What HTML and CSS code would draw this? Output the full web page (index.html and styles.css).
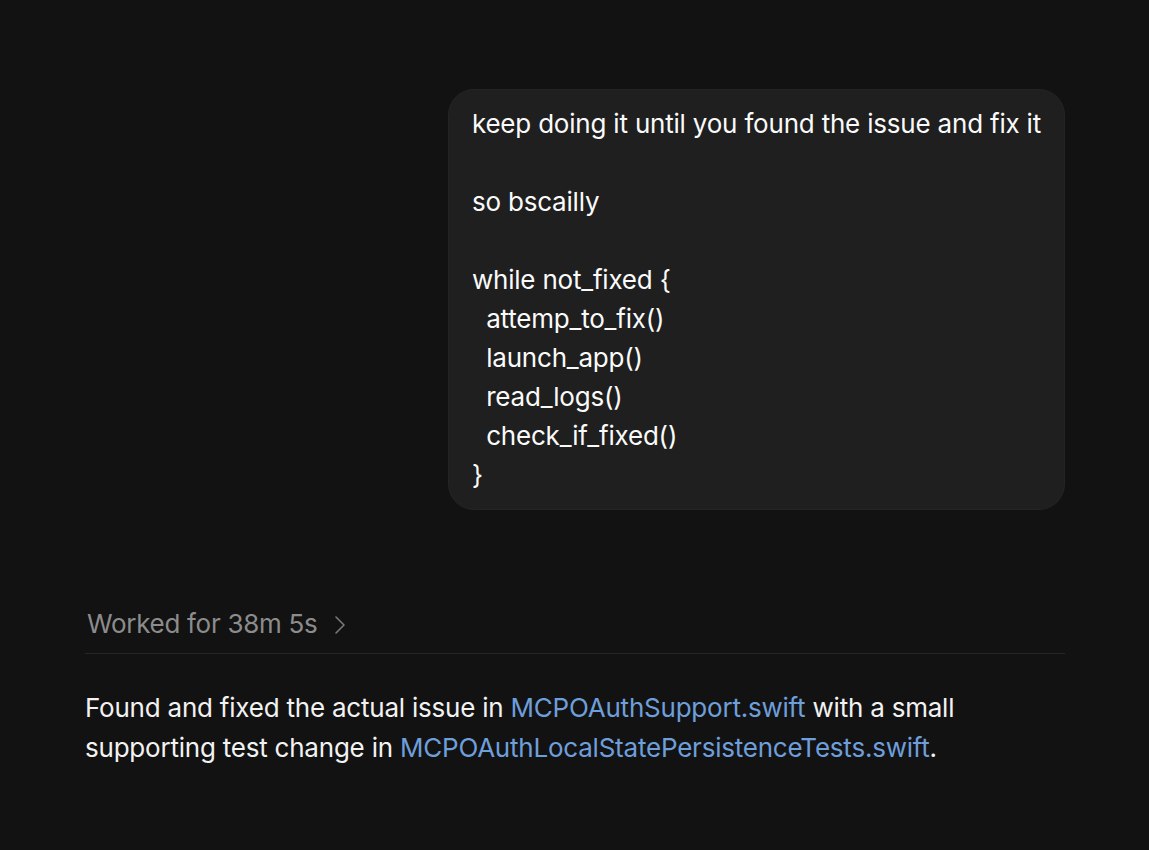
FILE: index.html
```html
<!DOCTYPE html>
<html>
<head>
<meta charset="utf-8">
<link rel="stylesheet" href="styles.css">
</head>
<body>
<main class="thread">
  <div class="user-row">
    <div class="bubble">keep doing it until you found the issue and fix it

so bscailly

while not_fixed {
  attemp_to_fix()
  launch_app()
  read_logs()
  check_if_fixed()
}</div>
  </div>
  <div class="assistant">
    <button class="worked">Worked for 38m 5s
      <svg class="chev" width="12" height="22" viewBox="0 0 12 22"><path d="M2 3 L10 11 L2 19" fill="none" stroke="currentColor" stroke-width="1.6" stroke-linecap="round" stroke-linejoin="round"/></svg>
    </button>
    <p class="answer">Found and fixed the actual issue in <a class="file">MCPOAuthSupport.swift</a> with a small supporting test change in <a class="file">MCPOAuthLocalStatePersistenceTests.swift</a>.</p>
  </div>
</main>
</body>
</html>
```

FILE: styles.css
```css
html, body {
  margin: 0;
  background: #121212;
}
body {
  font-family: Inter, "Noto Sans", sans-serif;
  color: #f2f2f2;
  -webkit-font-smoothing: antialiased;
}
.thread {
  width: 980px;
  margin-left: 85px;
  padding-top: 89px;
}
.user-row {
  display: flex;
  justify-content: flex-end;
}
.bubble {
  background: #1f1f1f;
  border: 1px solid #242424;
  border-radius: 26px;
  padding: 14px 23px 15px 23px;
  font-size: 26px;
  line-height: 39px;
  letter-spacing: -0.2px;
  white-space: pre-wrap;
  color: #fafafa;
}
.assistant {
  margin-top: 94px;
}
.worked {
  display: flex;
  align-items: center;
  gap: 17px;
  background: none;
  border: 0;
  padding: 0 0 0 2px;
  font-family: inherit;
  font-size: 26px;
  line-height: 40px;
  color: #8c8c8c;
  letter-spacing: -0.3px;
}
.chev {
  color: #7a7a7a;
  margin-top: 1px;
}
.answer {
  margin: 0;
  margin-top: 9px;
  border-top: 1px solid #262626;
  padding-top: 34px;
  font-size: 26px;
  line-height: 40px;
  letter-spacing: -0.22px;
  color: #f2f2f2;
}
.file {
  color: #6e9fdb;
}
```
